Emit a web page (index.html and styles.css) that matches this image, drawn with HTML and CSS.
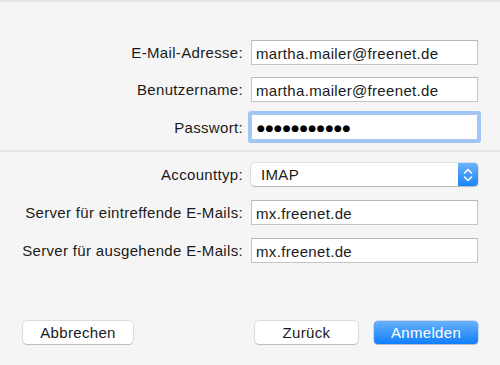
FILE: index.html
```html
<!DOCTYPE html>
<html lang="de">
<head>
<meta charset="utf-8">
<link rel="stylesheet" href="styles.css">
</head>
<body>
<div class="window">
  <div class="section top">
    <div class="row">
      <label class="label">E-Mail-Adresse:</label>
      <div class="field">martha.mailer@freenet.de</div>
    </div>
    <div class="row">
      <label class="label">Benutzername:</label>
      <div class="field">martha.mailer@freenet.de</div>
    </div>
    <div class="row">
      <label class="label">Passwort:</label>
      <div class="field focused"><span class="dots">●●●●●●●●●●●</span></div>
    </div>
  </div>
  <div class="separator"></div>
  <div class="section bottom">
    <div class="row">
      <label class="label">Accounttyp:</label>
      <div class="popup">
        <span class="popup-text">IMAP</span>
        <span class="stepper">
          <svg width="10" height="16" viewBox="0 0 10 16">
            <path d="M1.5 6 L5 2.5 L8.5 6" fill="none" stroke="#fff" stroke-width="1.6" stroke-linecap="round" stroke-linejoin="round"/>
            <path d="M1.5 10 L5 13.5 L8.5 10" fill="none" stroke="#fff" stroke-width="1.6" stroke-linecap="round" stroke-linejoin="round"/>
          </svg>
        </span>
      </div>
    </div>
    <div class="row">
      <label class="label">Server für eintreffende E-Mails:</label>
      <div class="field">mx.freenet.de</div>
    </div>
    <div class="row">
      <label class="label">Server für ausgehende E-Mails:</label>
      <div class="field">mx.freenet.de</div>
    </div>
  </div>
  <div class="buttons">
    <button class="btn cancel">Abbrechen</button>
    <div class="spacer"></div>
    <button class="btn back">Zurück</button>
    <button class="btn primary">Anmelden</button>
  </div>
</div>
</body>
</html>
```

FILE: styles.css
```css
html, body {
  margin: 0;
  padding: 0;
}
body {
  width: 500px;
  height: 365px;
  background: #f5f5f5;
  font-family: "Liberation Sans", Arial, sans-serif;
  font-size: 15px;
  letter-spacing: 0.33px;
  color: #1a1a1a;
  overflow: hidden;
}
.window {
  position: relative;
  height: 365px;
  background: linear-gradient(to bottom, #d9d9d9 0, #ececec 1px, #f5f5f5 3px);
}
.section {
  display: flex;
  flex-direction: column;
}
.top {
  padding-top: 40px;
  gap: 12px;
}
.row {
  display: flex;
  align-items: center;
}
.label {
  text-align: right;
  padding-right: 8px;
  box-sizing: border-box;
  width: 251px;
  white-space: nowrap;
}
.field {
  width: 227px;
  height: 25px;
  box-sizing: border-box;
  background: #fff;
  border: 1px solid #c4c4c4;
  border-top-color: #b8b8b8;
  padding: 1px 4px 0 4px;
  display: flex;
  align-items: center;
  white-space: nowrap;
}
.focused {
  height: 26px;
  border-color: #a9c7ee;
  box-shadow: 0 0 0 3px #9fc6f4;
  border-radius: 1px;
}
.dots {
  font-family: "DejaVu Sans", sans-serif;
  font-size: 9px;
  letter-spacing: 0.7px;
  color: #000;
  padding-left: 1px;
}
.separator {
  height: 2px;
  background: #e4e4e4;
  margin-top: 10px;
}
.bottom {
  padding-top: 11px;
  gap: 13px;
}
.bottom .row:nth-child(2) {
  margin-top: 1px;
}
.popup {
  width: 227px;
  height: 23px;
  box-sizing: border-box;
  background: #fff;
  border-radius: 4px;
  box-shadow: 0 0 0 0.5px rgba(0,0,0,0.18), 0 1px 1px rgba(0,0,0,0.18);
  display: flex;
  align-items: center;
  overflow: hidden;
}
.popup-text {
  flex: 1;
  padding-left: 10px;
}
.stepper {
  width: 20px;
  height: 23px;
  background: linear-gradient(to bottom, #6cb3fa, #1b84fb);
  display: flex;
  align-items: center;
  justify-content: center;
}
.stepper svg {
  display: block;
}
.buttons {
  display: flex;
  align-items: center;
  padding: 0 22px 0 23px;
  margin-top: 58px;
}
.spacer {
  flex: 1;
}
.btn {
  font-family: "Liberation Sans", Arial, sans-serif;
  font-size: 15px;
  letter-spacing: 0.33px;
  height: 23px;
  box-sizing: border-box;
  border: none;
  border-radius: 4px;
  background: #fff;
  color: #1a1a1a;
  box-shadow: 0 0 0 0.5px rgba(0,0,0,0.2), 0 1px 1px rgba(0,0,0,0.15);
  padding: 0;
  margin: 0;
  line-height: 23px;
}
.cancel {
  width: 110px;
}
.back {
  width: 103px;
}
.primary {
  width: 104px;
  margin-left: 16px;
  color: #fff;
  background: linear-gradient(to bottom, #69b1fa, #0f7ffb);
  box-shadow: 0 0 0 0.5px rgba(0,60,160,0.3), 0 1px 1px rgba(0,0,0,0.15);
}
```
